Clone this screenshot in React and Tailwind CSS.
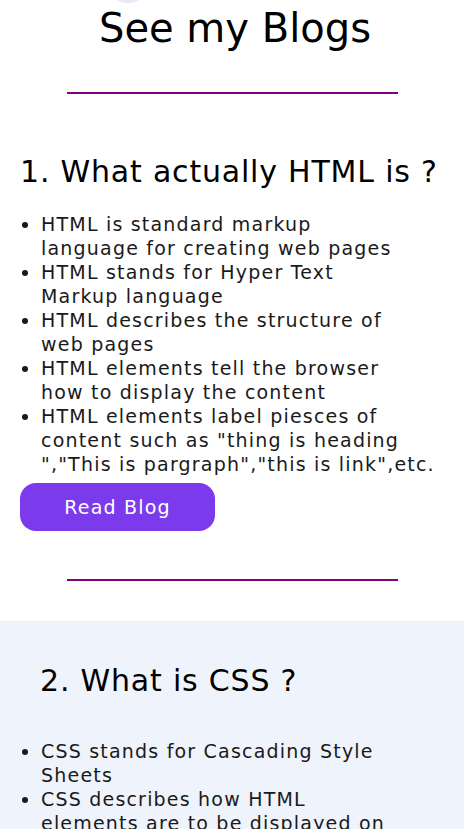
export default function App() {
  // line breaks follow the original layout
  const htmlPoints = [
    ['HTML is standard markup', 'language for creating web pages'],
    ['HTML stands for Hyper Text', 'Markup language'],
    ['HTML describes the structure of', 'web pages'],
    ['HTML elements tell the browser', 'how to display the content'],
    ['HTML elements label piesces of', 'content such as "thing is heading', '","This is pargraph","this is link",etc.'],
  ]
  const cssPoints = [
    ['CSS stands for Cascading Style', 'Sheets'],
    ['CSS describes how HTML', 'elements are to be displayed on', 'screen, paper, or in other media'],
    ['CSS saves a lot of work'],
  ]

  const renderItem = (lines) => (
    <li key={lines[0]}>
      {lines.map((l, i) => (
        <span key={i}>
          {i > 0 && <br />}
          {l}
        </span>
      ))}
    </li>
  )

  return (
    <div className="w-[464px] h-[829px] overflow-hidden bg-white font-['DejaVu_Sans',sans-serif] text-black relative">
      {/* bottom edge of the avatar above */}
      <div className="absolute left-[104px] top-[-60px] w-[48px] h-[63px] rounded-full bg-[#ebe8fb]" />

      <h1 className="pt-[4px] pl-[6px] text-center text-[40px] leading-[48px]">See my Blogs</h1>
      <div className="mt-[40px] mx-auto w-[331px] h-[2px] bg-[#800080]" />

      <section className="pt-[58px]">
        <h2 className="pl-[20px] text-[30px] leading-[40px] tracking-[0.8px]">1. What actually HTML is ?</h2>
        <ul className="mt-[20px] list-disc pl-[41px] whitespace-nowrap text-[19px] leading-[24px] tracking-[1.2px] text-[#1a1a1a]">
          {htmlPoints.map(renderItem)}
        </ul>
        <button className="ml-[20px] mt-[7px] w-[195px] h-[48px] rounded-[16px] bg-[#7c3aed] text-white text-[19px] tracking-[1.2px]">
          Read Blog
        </button>
        <div className="mt-[48px] mx-auto w-[331px] h-[2px] bg-[#800080]" />
      </section>

      <section className="mt-[40px] bg-[#eff3fb] pt-[40px] pb-[40px]">
        <h2 className="pl-[40px] text-[30px] leading-[40px] tracking-[0.8px]">2. What is CSS ?</h2>
        <ul className="mt-[38px] list-disc pl-[41px] whitespace-nowrap text-[19px] leading-[24px] tracking-[1.2px] text-[#1a1a1a]">
          {cssPoints.map(renderItem)}
        </ul>
      </section>
    </div>
  )
}
